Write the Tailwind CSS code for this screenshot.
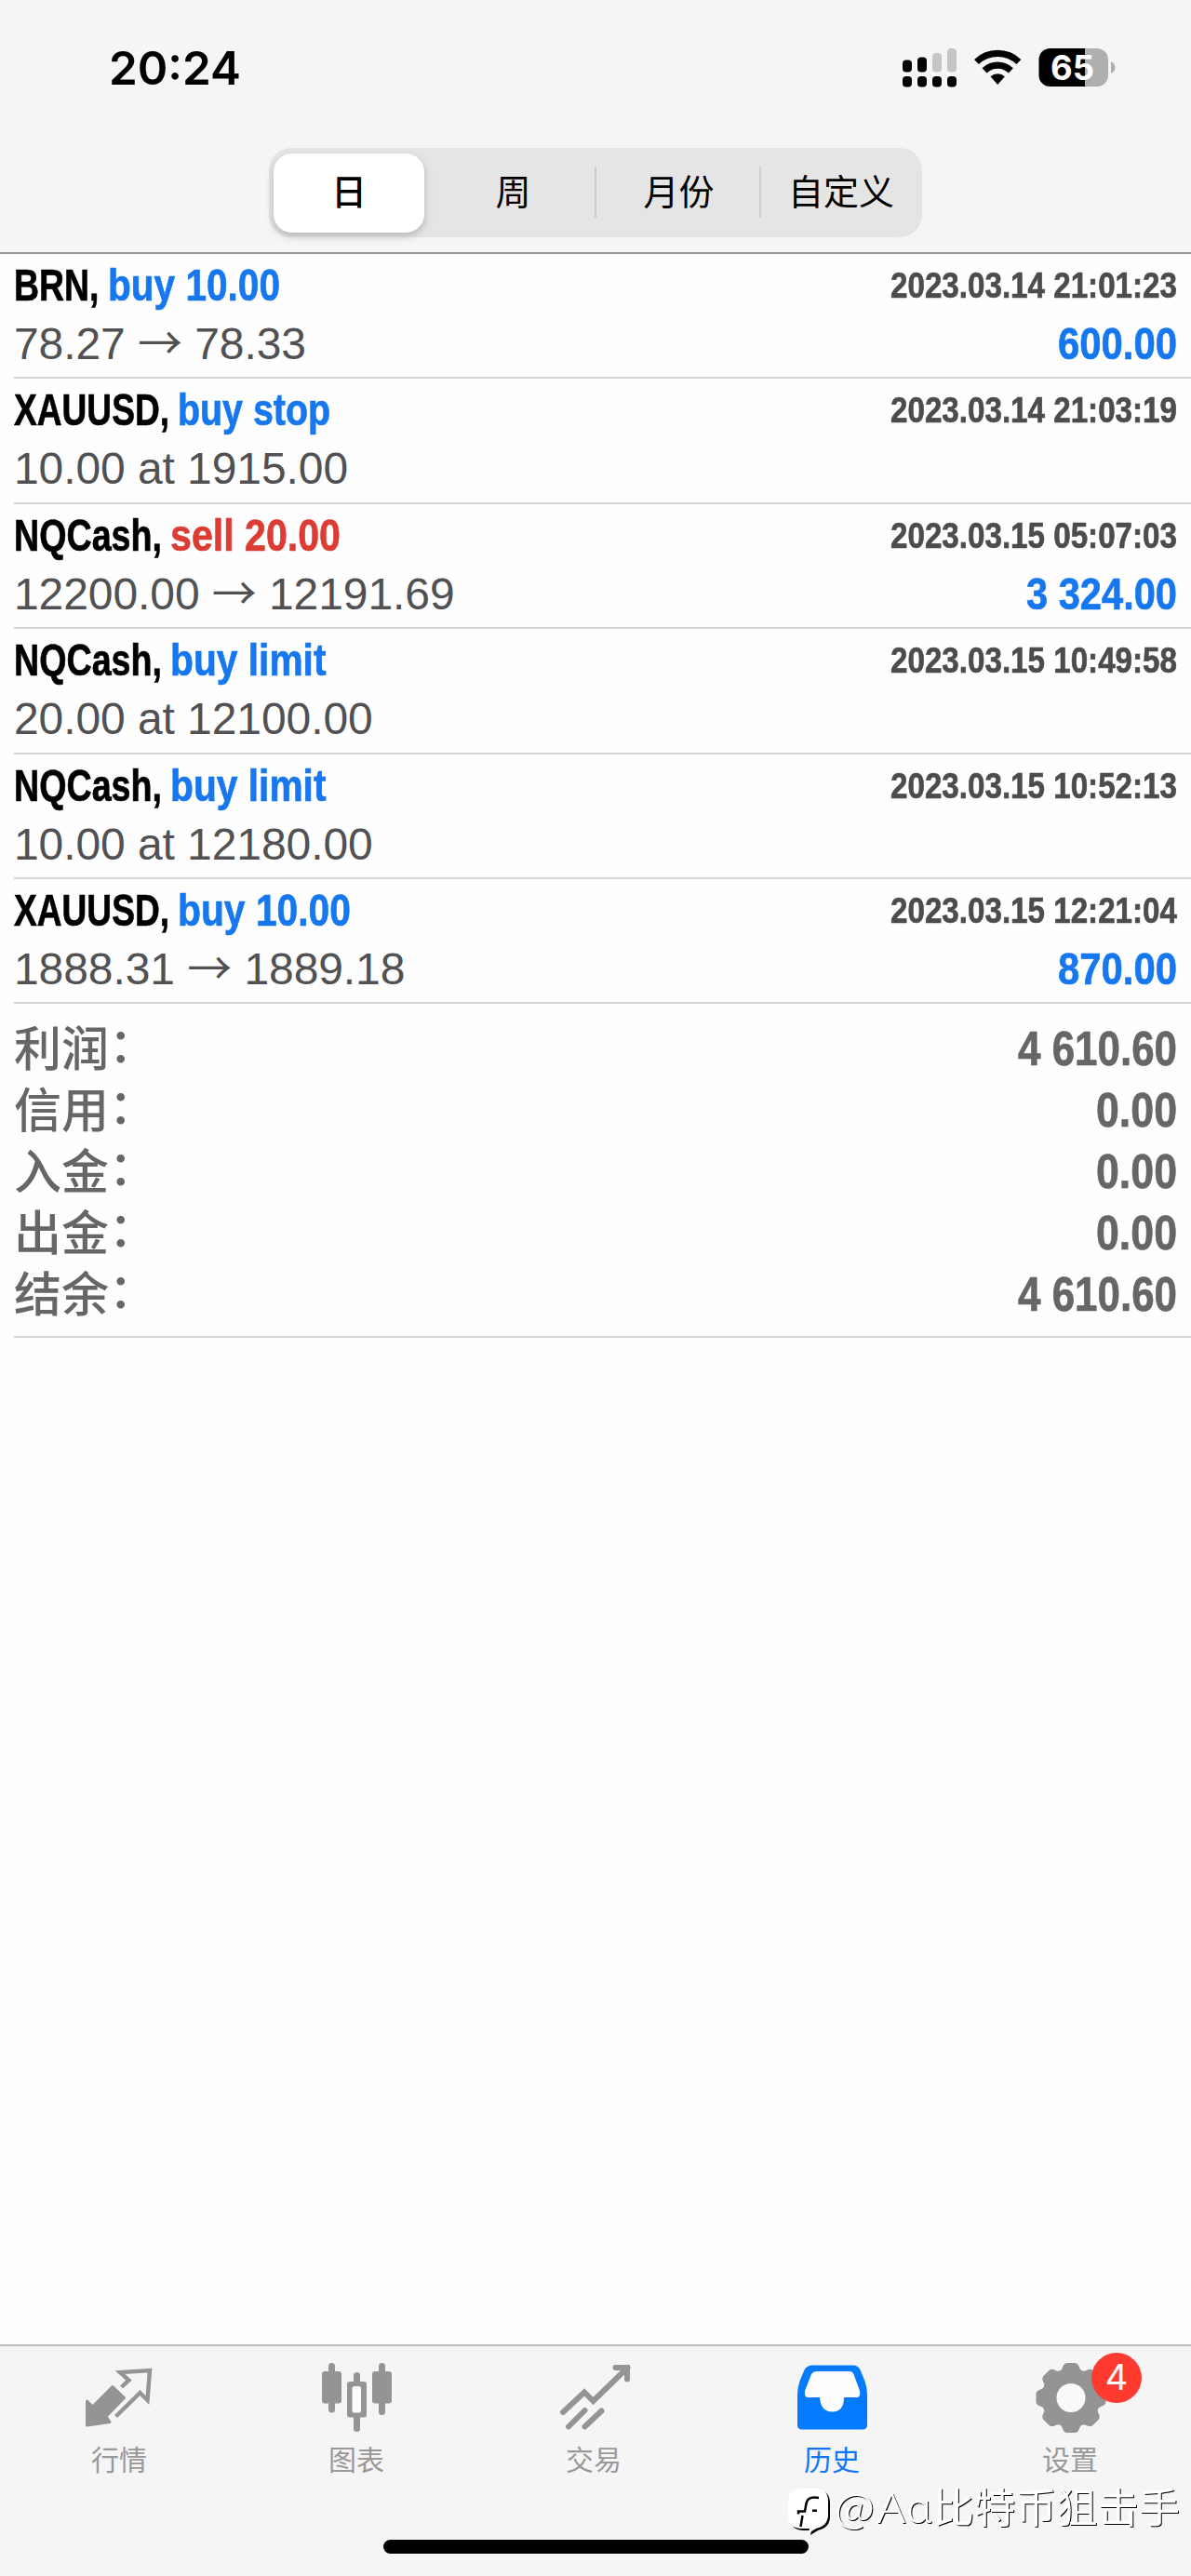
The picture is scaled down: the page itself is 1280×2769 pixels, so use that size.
<!DOCTYPE html>
<html lang="zh-CN">
<head>
<meta charset="utf-8">
<title>历史</title>
<script src="https://cdn.jsdelivr.net/npm/@tailwindcss/browser@4"></script>
</head>
<body class="bg-[#fefefe]">
<div class="relative flex h-[2769px] w-[1280px] flex-col overflow-hidden font-['Liberation_Sans','Noto_Sans_CJK_SC',sans-serif]">

  <header class="flex h-[273px] shrink-0 flex-col border-b-2 border-[#9b9b9d] bg-[#f5f5f5]">
    <div class="flex h-[159px] items-start justify-between pl-[117px] pr-[80px] pt-[50px]">
      <svg class="h-[46px] w-[142px] overflow-visible font-['Inter',sans-serif] font-semibold"><text x="0" y="41" font-size="50" textLength="142" lengthAdjust="spacingAndGlyphs">20:24</text></svg>
      <svg class="h-[46px] w-[230px]" viewBox="970 50 230 46">
        <g fill="#000">
          <rect x="970" y="64.500" width="10" height="13" rx="4"/><rect x="986" y="61.500" width="10" height="16" rx="4"/>
          <rect x="970" y="82" width="10" height="11.500" rx="4"/><rect x="986" y="82" width="10" height="11.500" rx="4"/><rect x="1002" y="82" width="10" height="11.500" rx="4"/><rect x="1018" y="82" width="10" height="11.500" rx="4"/>
        </g>
        <g fill="#c6c6c6"><rect x="1002" y="57" width="10" height="20.500" rx="4"/><rect x="1018" y="52" width="10" height="25.500" rx="4"/></g>
        <g fill="none" stroke="#000" stroke-width="7.200"><path d="M1049.500 66.500a33 33 0 0 1 45.400 0"/><path d="M1058 75.800a20.500 20.500 0 0 1 28.400 0"/></g>
        <path d="M1064.500 82.300a11.500 11.500 0 0 1 15.400 0L1072.200 91z"/>
        <clipPath id="bat"><rect x="1116.500" y="52" width="74.500" height="41" rx="12"/></clipPath>
        <g clip-path="url(#bat)"><rect x="1116" y="52" width="50" height="41"/><rect x="1166" y="52" width="26" height="41" fill="#afafaf"/></g>
        <path d="M1194 66q4.500 2 4.500 6.500T1194 79z" fill="#afafaf"/>
        <text x="1129" y="86" font-family="Inter" font-weight="700" font-size="36.500" fill="#fff" textLength="47" lengthAdjust="spacingAndGlyphs">65</text>
      </svg>
    </div>
    <div class="mx-auto flex h-[96px] w-[702px] rounded-[24px] bg-[#e5e5e6] p-[5px] text-[38px] leading-[84px] text-black">
      <div class="mt-px h-[85px] w-[162px] rounded-[20px] bg-white text-center font-medium shadow-[0_4px_10px_rgba(0,0,0,0.2)]">日</div>
      <div class="mt-px w-[183px] pl-[8px] text-center">周</div>
      <div class="mt-[15px] h-[55px] w-[2px] bg-[#cfcfd1]"></div>
      <div class="mt-px w-[175px] pl-[2px] text-center">月份</div>
      <div class="mt-[15px] h-[55px] w-[2px] bg-[#cfcfd1]"></div>
      <div class="mt-px flex-1 pl-[4px] text-center">自定义</div>
    </div>
  </header>

  <main class="flex-1">
    <ul id="deals" class="pl-[15px]"></ul>
    <dl id="summary" class="ml-[15px] flex h-[359px] flex-col border-b-2 border-[#d4d4d4] pr-[15px] pt-[14px] text-[#666]"></dl>
  </main>

  <nav class="h-[249px] shrink-0 border-t-2 border-[#bdbdbd] bg-[#f5f5f5] text-[30px] leading-[40px] text-[#999]">
    <div class="grid grid-cols-5">
      <div class="flex flex-col items-center pt-[18px]">
        <svg class="h-[84px] w-[80px]" viewBox="88 2540 80 84">
          <path fill="#949494" stroke="#949494" stroke-width="3" stroke-linejoin="round" d="M121 2565.500l12.500 12-19.500 20 4 6-24.500 3.500v-26l6 6z"/>
          <path fill="none" stroke="#949494" stroke-width="4.400" d="M130.500 2566l8-7.500-9.500-8.500 32-2-2.500 32-8-8-26 25.500"/>
        </svg>
        <span class="mt-[1px]">行情</span>
      </div>
      <div class="flex flex-col items-center pt-[18px]">
        <svg class="h-[84px] w-[80px]" viewBox="344 2540 80 84" fill="#949494">
          <rect x="353" y="2540" width="7" height="53.500" rx="3.500"/><rect x="346" y="2549" width="21" height="34.500" rx="3"/>
          <rect x="407" y="2540" width="7" height="56" rx="3.500"/><rect x="400" y="2549" width="21" height="34.500" rx="3"/>
          <rect x="380" y="2550" width="7" height="64" rx="3.500"/><rect x="373" y="2560" width="21" height="38.500" rx="3"/>
          <rect x="378.500" y="2565" width="9.500" height="28.500" rx="2.500" fill="#fbfbfb"/>
        </svg>
        <span class="mt-[1px] pr-[2px]">图表</span>
      </div>
      <div class="flex flex-col items-center pt-[18px]">
        <svg class="h-[84px] w-[80px]" viewBox="600 2540 80 84" fill="none" stroke="#949494" stroke-width="6" stroke-linecap="round">
          <path d="M605 2593l23-21.500 9.500 9.500 37-36"/><path d="M661.500 2545h12.500v12.500"/><path d="M611 2608.500l17.500-17.500M628.500 2608.500L646.500 2591.500"/>
        </svg>
        <span class="mt-[1px] pr-[4px]">交易</span>
      </div>
      <div class="flex flex-col items-center pt-[18px] text-[#0f75f5]">
        <svg class="h-[84px] w-[80px]" viewBox="856 2540 80 84">
          <path fill="#047aff" d="M873 2542.500h44q5 0 7.500 5l5 12q2.500 7 2.500 15v32q0 5-5 5h-65q-5 0-5-5v-32q0-8 2.500-15l5-12q3-5 8.500-5z"/>
          <path fill="#fdfdfd" d="M878 2549h35q3 0 4.500 3l6.500 18q1.200 7-3 7h-14q0 15.500-12.500 15.500T881 2577h-13q-4 0-3-7l7-18q2-3 6-3z"/>
        </svg>
        <span class="mt-[1px] pr-[4px]">历史</span>
      </div>
      <div class="flex flex-col items-center pt-[18px]">
        <div class="relative">
          <svg id="gear" class="h-[84px] w-[80px]" viewBox="-39 -37.500 80 84"><g fill="#949494"><circle r="31.500"/></g><circle r="15.500" fill="#f9f9f9"/></svg>
          <span class="absolute -top-[11px] left-[61px] h-[54px] w-[54px] rounded-full bg-[#ff3b30] text-center font-['Inter',sans-serif] text-[38px] leading-[53px] text-white">4</span>
        </div>
        <span class="mt-[1px] pr-[4px]">设置</span>
      </div>
    </div>
  </nav>

  <div class="absolute left-[412px] top-[2730px] h-[15px] w-[457px] rounded-full bg-black"></div>
  <svg class="absolute left-[840px] top-[2655px] h-[90px] w-[440px]" viewBox="840 2655 440 90">
    <path class="drop-shadow-[2px_2px_0_#000]" fill="#fff" d="M861 2675h16q13 0 13 14v14q0 12-13 15l-8 5 1-5h-8q-15 0-15-15v-13q0-15 14-15z"/>
    <path fill="none" stroke="#000" stroke-width="2.500" d="M880 2685q-12-2-13.500 6l-1.500 8.500h-7v3M862.500 2704l-2 12"/><rect x="873" y="2697.500" width="5" height="2.500"/>
    <g class="drop-shadow-[1.200px_1.200px_0_#000]" font-size="44" font-family="'Noto Sans CJK SC', sans-serif" fill="#fff">
      <text x="897" y="2712" textLength="43" lengthAdjust="spacingAndGlyphs" font-weight="300">@</text>
      <text x="943" y="2712" font-family="'Noto Sans'" font-weight="300" textLength="30" lengthAdjust="spacingAndGlyphs">A</text>
      <text x="974" y="2712" font-family="'Noto Sans'" font-weight="300" textLength="27" lengthAdjust="spacingAndGlyphs">ɑ</text>
      <text x="1003" y="2712" textLength="265">比特币狙击手</text>
    </g>
  </svg>
</div>

<script>
  // Condensed bold text: each label is squeezed horizontally to a given width.
  const pen = document.createElement('canvas').getContext('2d');
  const fit = (t, w, size, cls) => {
    pen.font = `bold ${size}px "Liberation Sans"`;
    const scale = w / pen.measureText(t).width;
    return `<span class="${cls} block shrink-0 font-bold" style="width:${w}px"><span class="inline-block origin-left whitespace-pre [-webkit-text-stroke:0.7px_currentColor]" style="transform:scaleX(${scale})">${t}</span></span>`;
  };
  const blue = 'text-[#1677ee]', red = 'text-[#dc3c34]';
  const deals = [
    ['BRN,', 91.5, 9, 'buy 10.00', 185, blue, '78.27 → 78.33', '2023.03.14 21:01:23', '600.00', 128],
    ['XAUUSD,', 167, 9, 'buy stop', 164, blue, '10.00 at 1915.00', '2023.03.14 21:03:19'],
    ['NQCash,', 159, 9, 'sell 20.00', 183, red, '12200.00 → 12191.69', '2023.03.15 05:07:03', '3 324.00', 162],
    ['NQCash,', 159, 9, 'buy limit', 167.5, blue, '20.00 at 12100.00', '2023.03.15 10:49:58'],
    ['NQCash,', 159, 9, 'buy limit', 167.5, blue, '10.00 at 12180.00', '2023.03.15 10:52:13'],
    ['XAUUSD,', 167, 9, 'buy 10.00', 186, blue, '1888.31 → 1889.18', '2023.03.15 12:21:04', '870.00', 128],
  ];
  document.getElementById('deals').innerHTML = deals.map(([s, sw, gap, a, aw, c, p, d, v, vw]) => `
    <li class="flex h-[134.4px] flex-col border-b-2 border-[#d4d4d4] pr-[15px]">
      <div class="flex h-[64px] justify-between leading-[66px]">
        <div class="flex text-[49px] leading-[67px]" style="gap:${gap}px">${fit(s, sw, 49, 'text-black')}${fit(a, aw, 49, c)}</div>
        ${fit(d, 308, 39.5, 'text-[39.5px] text-[#4c4c4e]')}
      </div>
      <div class="flex h-[66px] justify-between text-[48px] leading-[66px]">
        <span class="whitespace-pre tracking-[-0.08px] text-[#515153]">${p.replace('→', '<span class="font-[\'Noto_Sans_CJK_SC\'] leading-none">→</span>')}</span>
        ${v ? fit(v, vw, 48, 'text-[#1677ee]') : ''}
      </div>
    </li>`).join('');

  const summary = [['利润', '4 610.60', 171], ['信用', '0.00', 87], ['入金', '0.00', 87], ['出金', '0.00', 87], ['结余', '4 610.60', 171]];
  document.getElementById('summary').innerHTML = summary.map(([k, v, w]) => `
    <div class="flex h-[65.8px] justify-between text-[51px]">
      <dt class="font-['Noto_Sans_CJK_SC'] leading-[62px] font-medium">${k}<span class="relative -top-[4px]">：</span></dt>
      <dd class="leading-[69px]">${fit(v, w, 51, 'text-[#666]')}</dd>
    </div>`).join('');

  document.querySelector('#gear g').innerHTML += [0, 45, 90, 135, 180, 225, 270, 315].map(a =>
    `<path transform="rotate(${a})" d="M-14-28q4-1 5-5 1.500-4.500 5-4.500h8q3.500 0 5 4.500 1 4 5 5z"/>`).join('');
</script>
</body>
</html>
